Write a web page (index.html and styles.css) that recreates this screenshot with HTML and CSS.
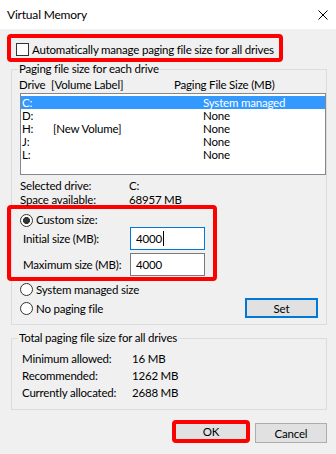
FILE: index.html
```html
<!DOCTYPE html>
<html>
<head>
<meta charset="utf-8">
<link rel="stylesheet" href="styles.css">
</head>
<body>
<div class="window">
  <div class="titlebar">
    <span class="title">Virtual Memory</span>
    <svg class="close" width="10" height="10" viewBox="0 0 10 10"><path d="M0.5 0.5L9.5 9.5M9.5 0.5L0.5 9.5" stroke="#000" stroke-width="1" fill="none"/></svg>
  </div>
  <div class="content">
    <div class="hl hl-auto"><span class="checkbox"></span><span class="cb-label">Automatically manage paging file size for all drives</span></div>

    <fieldset class="group group-drives">
      <legend>Paging file size for each drive</legend>
      <div class="list-head"><span class="c-drive">Drive</span><span class="c-label">[Volume Label]</span><span>Paging File Size (MB)</span></div>
      <div class="listbox">
        <div class="row selected"><span class="r-drive">C:</span><span class="r-label"></span><span>System managed</span></div>
        <div class="row"><span class="r-drive">D:</span><span class="r-label"></span><span>None</span></div>
        <div class="row"><span class="r-drive">H:</span><span class="r-label">[New Volume]</span><span>None</span></div>
        <div class="row"><span class="r-drive">J:</span><span class="r-label"></span><span>None</span></div>
        <div class="row"><span class="r-drive">L:</span><span class="r-label"></span><span>None</span></div>
      </div>
      <div class="info info-first"><span class="info-k">Selected drive:</span><span>C:</span></div>
      <div class="info"><span class="info-k">Space available:</span><span>68957 MB</span></div>

      <div class="hl hl-custom">
        <div class="radio-row custom-row"><span class="radio checked"></span><span>Custom size:</span></div>
        <div class="field"><span class="field-label">Initial size (MB):</span><div class="input focused"><span>4000</span><span class="caret"></span></div></div>
        <div class="field field-second"><span class="field-label">Maximum size (MB):</span><div class="input"><span>4000</span></div></div>
      </div>

      <div class="options">
        <div class="opt-list">
          <div class="radio-row opt-row"><span class="radio"></span><span>System managed size</span></div>
          <div class="radio-row opt-row"><span class="radio"></span><span>No paging file</span></div>
        </div>
        <button class="btn btn-set">Set</button>
      </div>
    </fieldset>

    <fieldset class="group group-total">
      <legend>Total paging file size for all drives</legend>
      <div class="total"><span class="total-k">Minimum allowed:</span><span>16 MB</span></div>
      <div class="total"><span class="total-k">Recommended:</span><span>1262 MB</span></div>
      <div class="total"><span class="total-k">Currently allocated:</span><span>2688 MB</span></div>
    </fieldset>

    <div class="actions">
      <div class="hl hl-ok"><button class="btn-ok">OK</button></div>
      <button class="btn btn-cancel">Cancel</button>
    </div>
  </div>
</div>
</body>
</html>
```

FILE: styles.css
```css
* { box-sizing: border-box; }
html, body {
  margin: 0;
  padding: 0;
}
body {
  width: 336px;
  height: 454px;
  overflow: hidden;
  background: #f0f0f0;
  font-family: "Lato", "Noto Sans", sans-serif;
  font-size: 11.5px;
  letter-spacing: -0.2px;
  line-height: 14px;
  color: #000;
  white-space: nowrap;
}
.window {
  width: 336px;
  height: 454px;
}
.titlebar {
  height: 29px;
  background: #fff;
  display: flex;
  align-items: center;
  justify-content: space-between;
  padding: 0 8px 0 7px;
}
.title {
  font-size: 12px;
}
.close {
  display: block;
  margin-top: 1px;
}
.content {
  display: flex;
  flex-direction: column;
}
.hl {
  border: 4px solid #ff0000;
  border-radius: 4px;
}
.hl-auto {
  margin: 5px 0 0 7px;
  width: 276px;
  height: 28px;
  display: flex;
  align-items: center;
  padding-left: 5px;
  padding-top: 3px;
}
.checkbox {
  width: 13px;
  height: 13px;
  border: 1px solid #333;
  background: #fff;
  flex: none;
}
.cb-label {
  margin-left: 3px;
}
.group {
  margin: 0 0 0 11px;
  width: 316px;
  min-width: 0;
  border: 1px solid #dcdcdc;
  padding: 0;
}
.group legend {
  padding: 0 1px;
  margin-left: 6px;
  line-height: 14px;
}
.list-head {
  display: flex;
  margin-top: 2px;
  padding-left: 7px;
}
.c-drive { width: 32px; }
.c-label { width: 123px; }
.listbox {
  margin: 1px 0 0 8px;
  width: 306px;
  height: 82px;
  border: 1px solid #828790;
  background: #fff;
  padding-top: 2px;
}
.row {
  display: flex;
  height: 13px;
  line-height: 13px;
  padding-left: 1px;
}
.row.selected {
  background: #3399ff;
  color: #fff;
}
.r-drive { width: 31px; }
.r-label { width: 150px; }
.info {
  display: flex;
  padding-left: 8px;
}
.info-first { margin-top: 4px; }
.info-k { width: 109px; }
.hl-custom {
  margin: -2px 0 0 -5px;
  width: 210px;
  height: 76px;
  padding: 4px 0 1px 0;
  display: flex;
  flex-direction: column;
}
.radio-row {
  display: flex;
  align-items: center;
}
.custom-row {
  height: 14px;
  padding-left: 9px;
}
.radio {
  width: 13px;
  height: 13px;
  border: 1px solid #333;
  border-radius: 50%;
  background: #fff;
  margin-right: 3px;
  flex: none;
}
.radio.checked {
  background: radial-gradient(circle, #333 0, #333 3.2px, #fff 3.8px);
}
.field {
  display: flex;
  align-items: center;
  height: 23px;
  padding-left: 12px;
}
.field-second { margin-top: 3px; }
.field-label { width: 107px; }
.input {
  width: 75px;
  height: 23px;
  border: 1px solid #7a7a7a;
  background: #fff;
  display: flex;
  align-items: center;
  padding-left: 5px;
}
.input.focused { border-color: #0078d7; }
.caret {
  width: 1px;
  height: 15px;
  background: #000;
  margin-left: 1px;
}
.options {
  display: flex;
  margin-top: -1px;
  padding: 0 8px 6px 8px;
}
.opt-list {
  display: flex;
  flex-direction: column;
}
.opt-row { height: 19px; }
.btn {
  font-family: inherit;
  font-size: inherit;
  letter-spacing: inherit;
  color: #000;
  background: #e1e1e1;
  border: 1px solid #adadad;
  padding: 0;
  margin: 0;
}
.btn-set {
  margin-left: auto;
  align-self: flex-end;
  width: 73px;
  height: 20px;
  border: 2px solid #0078d7;
}
.group-total {
  margin-top: 6px;
  padding: 5px 0 8px 0;
}
.total {
  display: flex;
  height: 17px;
  line-height: 17px;
  padding-left: 10px;
}
.total-k { width: 110px; }
.actions {
  display: flex;
  justify-content: flex-end;
  align-items: flex-end;
  margin-top: 10px;
  padding-right: 9px;
  height: 23px;
}
.hl-ok {
  width: 78px;
  height: 23px;
  display: flex;
}
.btn-ok {
  flex: 1;
  font-family: inherit;
  font-size: inherit;
  letter-spacing: inherit;
  color: #000;
  background: #e1e1e1;
  border: none;
  padding: 0;
  margin: 0;
  line-height: 15px;
}
.btn-cancel {
  margin-left: 5px;
  width: 72px;
  height: 20px;
}
```
